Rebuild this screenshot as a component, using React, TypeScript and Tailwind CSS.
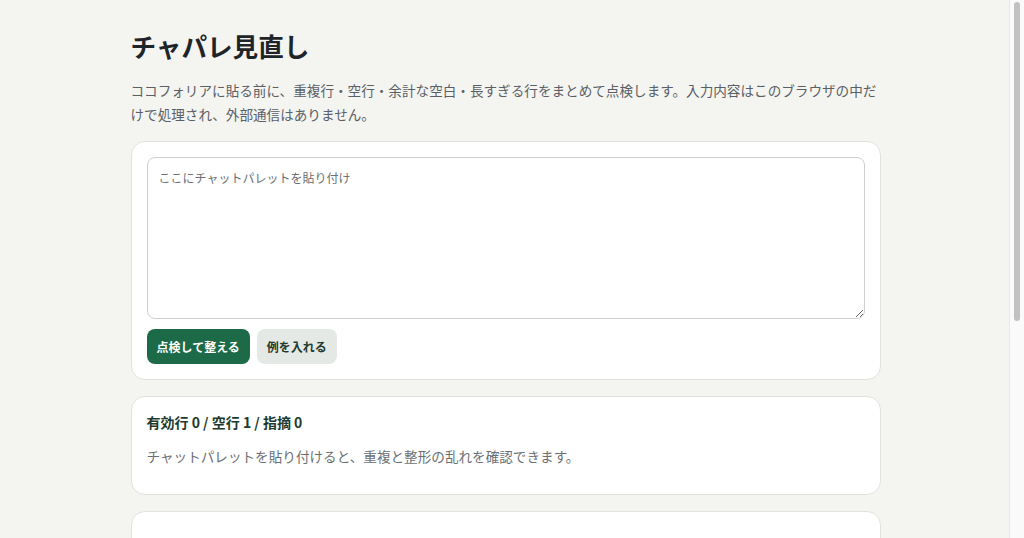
import { useState } from "react";

const font = { fontFamily: '"Noto Sans CJK JP", "Noto Sans", sans-serif' };

const App = () => {
  const [text, setText] = useState("");

  return (
    <div className="min-h-screen bg-[#f4f4f1] pr-[13px]" style={font}>
      <main className="mx-auto max-w-[750px] pt-[28px] pb-10">
        <h1 className="text-[25.6px] font-bold leading-[36px] text-[#1f2429]">チャパレ見直し</h1>
        <p className="mt-[14px] text-[13.6px] leading-[24px] text-[#5a5f66]">
          ココフォリアに貼る前に、重複行・空行・余計な空白・長すぎる行をまとめて点検します。入力内容はこのブラウザの中だけで処理され、外部通信はありません。
        </p>

        {/* input card */}
        <section className="mt-[15px] rounded-[14px] border border-[#e2e2dd] bg-white p-[15px]">
          <textarea
            value={text}
            onChange={(e) => setText(e.target.value)}
            placeholder="ここにチャットパレットを貼り付け"
            className="block h-[162px] w-full rounded-lg border border-[#cdd1ce] bg-white p-[11px] text-[12px] leading-[18px] text-[#1f2429] placeholder:text-[#6b6f74] focus:outline-none"
          />
          <div className="mt-[10px] flex gap-[7px]">
            <button className="h-[35px] rounded-lg bg-[#1c6a47] px-[10px] text-[12px] font-bold text-white">
              点検して整える
            </button>
            <button className="h-[35px] rounded-lg bg-[#e5e9e6] px-[10px] text-[12px] font-bold text-[#1f3b2f]">
              例を入れる
            </button>
          </div>
        </section>

        {/* summary card */}
        <section className="mt-4 rounded-[14px] border border-[#e2e2dd] bg-white px-[15px] pt-[15px] pb-[26px]">
          <h2 className="text-[14px] font-bold leading-[20px] text-[#1d3a2e]">有効行 0 / 空行 1 / 指摘 0</h2>
          <p className="mt-[12px] text-[13.6px] leading-[24px] text-[#6b6f74]">
            チャットパレットを貼り付けると、重複と整形の乱れを確認できます。
          </p>
        </section>

        {/* result card */}
        <section className="mt-4 h-[220px] rounded-[14px] border border-[#e2e2dd] bg-white" />
      </main>

      {/* browser scrollbar */}
      <div className="fixed top-0 right-0 h-screen w-[15px] border-l border-[#e8e8e8] bg-[#fafafa] px-[4px] pt-[2px]">
        <div className="h-[319px] w-[6px] rounded-full bg-[#c1c1c1]" />
      </div>
    </div>
  );
};

export default App;
